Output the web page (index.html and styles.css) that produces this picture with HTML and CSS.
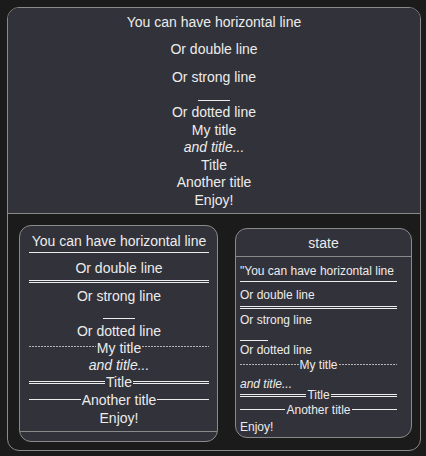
FILE: index.html
```html
<!DOCTYPE html>
<html>
<head>
<meta charset="utf-8">
<link rel="stylesheet" href="styles.css">
</head>
<body>
<div class="outer">
  <div class="outer-head">
    <div class="row">You can have horizontal line</div>
    <div class="row gap10">Or double line</div>
    <div class="row gap10">Or strong line</div>
    <div class="short short-lg"></div>
    <div class="row gap3">Or dotted line</div>
    <div class="row">My title</div>
    <div class="row it">and title...</div>
    <div class="row">Title</div>
    <div class="row">Another title</div>
    <div class="row">Enjoy!</div>
  </div>
  <div class="outer-body">
    <div class="box box-left">
      <div class="lb-main">
        <div class="row">You can have horizontal line</div>
        <div class="hr lb-hr1"></div>
        <div class="row">Or double line</div>
        <div class="dhr lb-dhr"></div>
        <div class="row">Or strong line</div>
        <div class="short short-lg lb-short"></div>
        <div class="row">Or dotted line</div>
        <div class="thr dotted o6"><span>My title</span></div>
        <div class="row it">and title...</div>
        <div class="thr double o7"><span>Title</span></div>
        <div class="thr single o7 m1"><span>Another title</span></div>
        <div class="row m1">Enjoy!</div>
      </div>
      <div class="lb-foot"></div>
    </div>
    <div class="box box-right">
      <div class="rb-head">state</div>
      <div class="rb-main">
        <div class="row">"You can have horizontal line</div>
        <div class="hr rb-hr1"></div>
        <div class="row">Or double line</div>
        <div class="dhr rb-dhr"></div>
        <div class="row">Or strong line</div>
        <div class="short short-sm rb-short"></div>
        <div class="row">Or dotted line</div>
        <div class="thr dotted o5 m3"><span>My title</span></div>
        <div class="row it m7">and title...</div>
        <div class="thr double o5 mneg1"><span>Title</span></div>
        <div class="thr single o5 m3"><span>Another title</span></div>
        <div class="row m5">Enjoy!</div>
      </div>
    </div>
  </div>
</div>
</body>
</html>
```
FILE: styles.css
```css
html, body {
  margin: 0;
  padding: 0;
}
body {
  background: #1b1b1b;
  font-family: "Liberation Sans", Arial, sans-serif;
  color: #ececec;
  width: 426px;
  height: 456px;
  overflow: hidden;
}
.outer {
  margin: 7px 0 0 7px;
  width: 412px;
  height: 442px;
  border: 1px solid #8a8a8a;
  border-radius: 12px;
  overflow: hidden;
}
.outer-head {
  background: #32323a;
  border-bottom: 1px solid #8a8a8a;
  padding: 5.5px 0 4px;
  text-align: center;
  font-size: 14px;
  line-height: 17.5px;
}
.row {
  white-space: nowrap;
}
.it {
  font-style: italic;
}
.gap10 { margin-top: 10px; }
.gap3 { margin-top: 3px; }
.m1 { margin-top: 1px; }
.m3 { margin-top: 3px; }
.m5 { margin-top: 5px; }
.m7 { margin-top: 7px; }
.mneg1 { margin-top: -1px; }

.short {
  height: 0;
  border-top: 1px solid #ececec;
}
.short-lg {
  width: 32px;
  margin: 14px auto 0;
}
.short-sm {
  width: 28px;
}

.outer-body {
  display: flex;
  align-items: flex-start;
  gap: 17px;
  padding: 11px 0 0 11px;
}
.box {
  border: 1px solid #8a8a8a;
  border-radius: 12px;
  background: #32323a;
  overflow: hidden;
}
.box-left {
  width: 197px;
  font-size: 14px;
  line-height: 17px;
  text-align: center;
}
.lb-main {
  padding: 7px 8px 4px 9px;
}
.lb-foot {
  height: 9px;
  border-top: 1px solid #8a8a8a;
}
.hr {
  height: 0;
  border-top: 1px solid #ececec;
}
.dhr {
  height: 1px;
  border-top: 1px solid #ececec;
  border-bottom: 1px solid #ececec;
}
.lb-hr1 { margin: 2px 0 7px; }
.lb-dhr { margin: 3px 0 5px; }
.lb-short { margin: 13px auto 4px; }

.box-right {
  width: 175px;
  margin-top: 3px;
}
.rb-head {
  font-size: 14px;
  line-height: 17px;
  text-align: center;
  padding: 6px 0 4px;
  border-bottom: 1px solid #8a8a8a;
}
.rb-main {
  font-size: 12px;
  line-height: 12px;
  padding: 8px 14px 4px 4px;
}
.rb-hr1 { margin: 4px 0 7px; }
.rb-dhr { margin: 5px 0 5px; }
.rb-short { margin: 14px 0 3px; }

.thr {
  display: flex;
  align-items: flex-start;
  white-space: nowrap;
}
.thr span {
  padding: 0 1px;
}
.thr::before,
.thr::after {
  content: "";
  flex: 1;
  margin-top: var(--off);
}
.o5 { --off: 5px; }
.o6 { --off: 6px; }
.o7 { --off: 7px; }
.thr.single::before,
.thr.single::after {
  height: 0;
  border-top: 1px solid #ececec;
}
.thr.double::before,
.thr.double::after {
  height: 1px;
  border-top: 1px solid #ececec;
  border-bottom: 1px solid #ececec;
}
.thr.dotted::before,
.thr.dotted::after {
  height: 1px;
  background: repeating-linear-gradient(90deg, #b4b4b4 0 2px, transparent 2px 3px);
}
```
